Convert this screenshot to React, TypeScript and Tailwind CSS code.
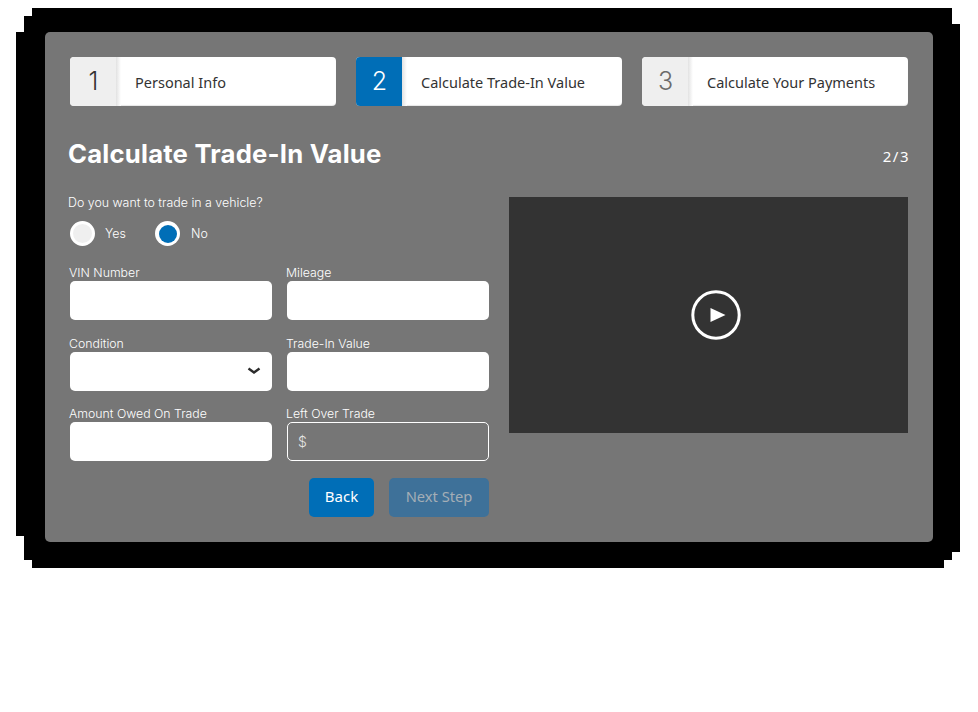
import React from 'react';

const steps = [
  { n: '1', label: 'Personal Info', active: false, numColor: 'text-[#333333]' },
  { n: '2', label: 'Calculate Trade-In Value', active: true, numColor: 'text-white' },
  { n: '3', label: 'Calculate Your Payments', active: false, numColor: 'text-[#6b6b6b]' },
];

function Step({ n, label, active, numColor }: { n: string; label: string; active: boolean; numColor: string }) {
  return (
    <div className="flex h-[49px] w-[266px] overflow-hidden rounded-[4px] bg-white shadow-[inset_0_-1px_1px_rgba(0,0,0,0.1)]">
      <div
        className={`flex w-[46px] items-center justify-center pl-[1px] text-[25px] font-light font-['Inter',sans-serif] ${numColor} ${
          active ? 'bg-[#006eb7]' : 'bg-[#efefef]'
        }`}
      >
        {n}
      </div>
      <div className="w-[5px] bg-gradient-to-r from-[#e2e2e2] to-white" />
      <div className="flex flex-1 items-center pl-[14px] pt-[2px] text-[14.5px] text-[#333333] font-['Noto_Sans',sans-serif]">
        {label}
      </div>
    </div>
  );
}

function Field({ label, children }: { label: string; children?: React.ReactNode }) {
  return (
    <div className="flex w-[202px] flex-col">
      <label className="-ml-px h-[16px] pt-[1px] text-[12.3px] font-light leading-[16px] text-white font-['Inter',sans-serif]">
        {label}
      </label>
      {children ?? <div className="mt-[1px] h-[39px] rounded-[5px] bg-white" />}
    </div>
  );
}

export default function App() {
  return (
    <div className="h-[712px] w-[978px] overflow-hidden bg-white pl-[32px] pt-[8px]">
      {/* stepped black backdrop */}
      <div className="relative h-[560px] w-[912px] bg-black pl-[13px] pt-[24px]">
        <div className="absolute top-0 bottom-[8px] left-0 right-[-8px] bg-black" />
        <div className="absolute top-[8px] bottom-[8px] left-[-8px] right-0 bg-black" />
        <div className="absolute top-[24px] bottom-[32px] left-[-16px] right-0 bg-black" />
        <div className="absolute top-[16px] bottom-[16px] left-0 right-[-16px] bg-black" />
        <div className="relative h-[510px] w-[888px] rounded-[5px] bg-[#767676] pl-[25px] pt-[25px] font-['Inter',sans-serif]">
          <div className="flex gap-[20px]">
            {steps.map((s) => (
              <Step key={s.n} {...s} />
            ))}
          </div>

          <div className="mt-[31px] flex h-[34px] w-[839px] items-center justify-between">
            <h1 className="-ml-[2px] text-[25.7px] font-bold tracking-[0.2px] text-white">Calculate Trade-In Value</h1>
            <span className="-mr-px mt-[4px] text-[15px] tracking-[1.5px] text-white font-['Noto_Sans',sans-serif]">2/3</span>
          </div>

          <div className="mt-[23px] flex gap-[20px]">
            <div className="w-[419px]">
              <p className="-ml-[2px] mt-[1px] h-[16px] text-[12.4px] font-light leading-[16px] text-white">Do you want to trade in a vehicle?</p>
              <div className="mt-[10px] flex items-center">
                <span className="h-[25px] w-[25px] rounded-full border-[3px] border-white bg-[#efefef]" />
                <span className="ml-[10px] w-[50px] pt-[1px] text-[12.4px] font-light text-white">Yes</span>
                <span className="flex h-[25px] w-[25px] items-center justify-center rounded-full bg-white">
                  <span className="h-[18px] w-[18px] rounded-full bg-[#006eb7]" />
                </span>
                <span className="ml-[11px] pt-[1px] text-[12.4px] font-light text-white">No</span>
              </div>

              <div className="mt-[18px] grid grid-cols-[202px_202px] gap-x-[15px] gap-y-[14.5px]">
                <Field label="VIN Number" />
                <Field label="Mileage" />
                <Field label="Condition">
                  <div className="mt-[1px] flex h-[39px] items-center justify-end rounded-[5px] bg-white pr-[11px]">
                    <svg width="14" height="8" viewBox="0 0 14 8" fill="none">
                      <path d="M1.5 1.5 L7 5.5 L12.5 1.5" stroke="#2b2b2b" strokeWidth="2.4" />
                    </svg>
                  </div>
                </Field>
                <Field label="Trade-In Value" />
                <Field label="Amount Owed On Trade" />
                <Field label="Left Over Trade">
                  <div className="mt-[1px] flex h-[39px] items-center rounded-[5px] border border-white pl-[10px] text-[14px] font-light text-[#e6e6e6]">
                    $
                  </div>
                </Field>
              </div>

              <div className="mt-[17px] flex justify-end gap-[15px]">
                <button className="h-[39px] w-[65px] rounded-[5px] bg-[#006eb7] pb-[2px] text-[15px] text-white font-['Noto_Sans',sans-serif]">Back</button>
                <button className="h-[39px] w-[100px] rounded-[5px] bg-[#3e7199] pb-[2px] text-[14.7px] text-[#a4aeb6] font-['Noto_Sans',sans-serif]">Next Step</button>
              </div>
            </div>

            <div className="mt-[3px] flex h-[236px] w-[399px] items-center justify-center bg-[#333333]">
              <svg className="ml-[15px]" width="50" height="50" viewBox="0 0 50 50" fill="none">
                <circle cx="25" cy="25" r="23.2" stroke="white" strokeWidth="3" />
                <path d="M19.5 18 L34.5 25 L19.5 32 Z" fill="white" />
              </svg>
            </div>
          </div>
        </div>
      </div>
    </div>
  );
}
